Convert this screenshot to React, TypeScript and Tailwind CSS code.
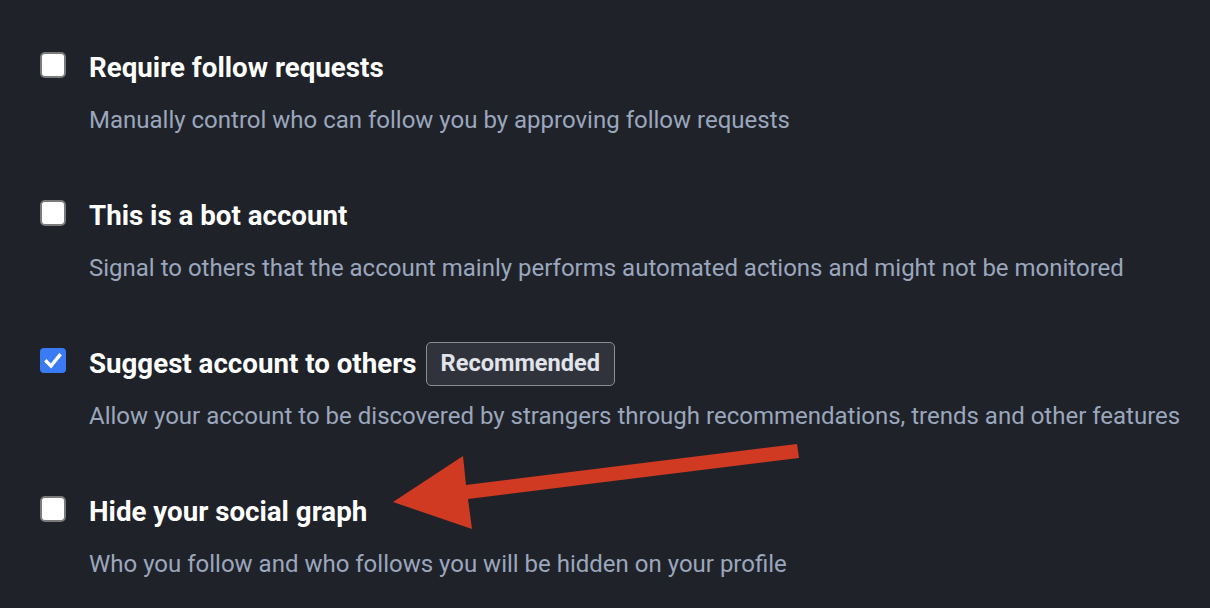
import React from "react";

type Row = { title: string; desc: string; checked: boolean; badge?: string };

const rows: Row[] = [
  { title: "Require follow requests", desc: "Manually control who can follow you by approving follow requests", checked: false },
  { title: "This is a bot account", desc: "Signal to others that the account mainly performs automated actions and might not be monitored", checked: false },
  { title: "Suggest account to others", desc: "Allow your account to be discovered by strangers through recommendations, trends and other features", checked: true, badge: "Recommended" },
  { title: "Hide your social graph", desc: "Who you follow and who follows you will be hidden on your profile", checked: false },
];

function Box({ checked }: { checked: boolean }) {
  if (checked) {
    return (
      <div className="w-[26px] h-[25px] shrink-0 rounded-[4px] bg-[#3a7bf3] flex items-center justify-center">
        <svg width="18" height="16" viewBox="0 0 18 16">
          <path d="M2.5 8.5 L7 13 L15.5 2.5" fill="none" stroke="#fff" strokeWidth="3.4" strokeLinecap="square" strokeLinejoin="miter" />
        </svg>
      </div>
    );
  }
  return <div className="w-[26px] h-[26px] shrink-0 rounded-[5px] bg-white border-[2px] border-[#7a7a7a]" />;
}

export default function App() {
  return (
    <div className="relative w-[1210px] h-[608px] bg-[#202229] overflow-hidden" style={{ fontFamily: "Roboto, 'Noto Sans', sans-serif" }}>
      <div className="flex flex-col gap-[65px] pt-[52px] pl-[40px]">
        {rows.map((r) => (
          <div key={r.title} className="flex items-start gap-[23px]">
            <Box checked={r.checked} />
            <div className="flex flex-col">
              <div className="flex items-center h-[32px] gap-[9px]">
                <span className="text-[27.7px] leading-[32px] font-bold text-white whitespace-nowrap">{r.title}</span>
                {r.badge && (
                  <span className="h-[44px] shrink-0 px-[14px] flex items-center rounded-[5px] border border-[#8b8e96] bg-[#30333c] text-[23.6px] font-bold text-[#e1e4ea]">
                    {r.badge}
                  </span>
                )}
              </div>
              <div className="mt-[21px] text-[24px] leading-[30px] text-[#9aa7bd] whitespace-nowrap">{r.desc}</div>
            </div>
          </div>
        ))}
      </div>
      <svg className="absolute left-0 top-0 pointer-events-none" width="1210" height="608" viewBox="0 0 1210 608">
        <polygon points="797,444 466,485 463,456 393,502 472,529 468,499 799,458" fill="#d13a22" />
      </svg>
    </div>
  );
}
